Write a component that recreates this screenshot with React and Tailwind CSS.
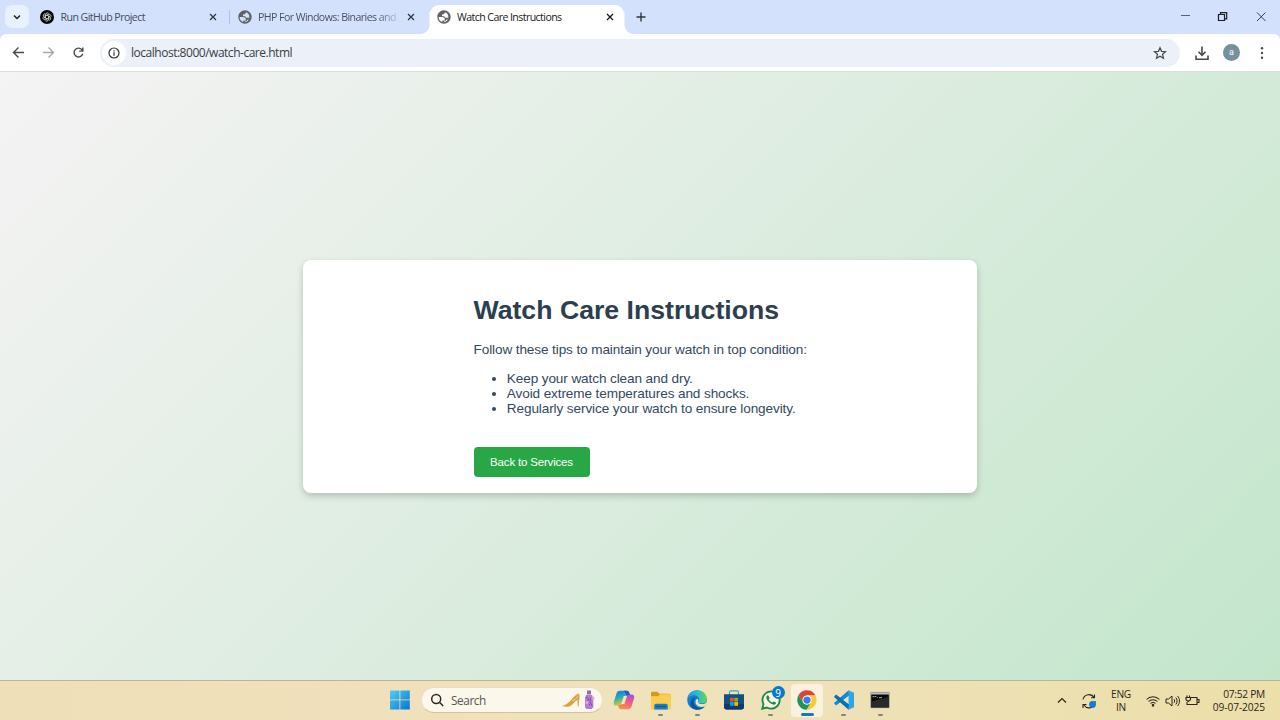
import React from "react";

const ui = "font-['Open_Sans','Noto_Sans',sans-serif]";

function CloseIcon({ className = "text-[#33363b]" }) {
  return (
    <svg width="14" height="14" viewBox="0 0 14 14" className={`shrink-0 ${className}`}>
      <path d="M4 4l6 6M10 4l-6 6" stroke="currentColor" strokeWidth="1.3" fill="none" />
    </svg>
  );
}

function GlobeIcon() {
  return (
    <svg width="14" height="14" viewBox="1.500 1.500 21 21" className="shrink-0">
      <path
        d="M12 2C6.480 2 2 6.480 2 12s4.480 10 10 10 10-4.480 10-10S17.520 2 12 2zM4 12h4.400c3.400 0 5.200 1.700 5 5.100H9.600v2.500A8 8 0 0 1 4 12zm8.200 8v-1.500c2 0 2.800-.6 2.800-2.500h1.500c1.500 0 1.500-2.500 1.500-3h-3.500c-1.500 0-2-1-2-2h-2.500c-1.500 0-1.500-3 0-3h2.200c0-1.500.8-2.600 2.300-2.600h.2A8 8 0 0 1 12.200 20z"
        fill="#5f6368"
        fillRule="evenodd"
      />
    </svg>
  );
}

function KnotIcon() {
  return (
    <svg width="14" height="14" viewBox="0 0 28 28" className="shrink-0">
      <circle cx="14" cy="14" r="14" fill="#050505" />
      <g fill="none" stroke="#e4e4e4" strokeWidth="1.1">
        {[0, 60, 120, 180, 240, 300].map((a) => (
          <path key={a} transform={`rotate(${a} 14 14)`} d="M10.800 16v-6.500a4 4 0 0 1 7.200-2.400M10.800 12l6-3.500 4.500 2.600" />
        ))}
      </g>
    </svg>
  );
}

function TabStrip() {
  return (
    <div className={`flex h-[34px] w-full items-start bg-[#d3e1fd] text-[10.600px] ${ui}`}>
      <div className="ml-[5px] mt-[5px] flex h-[23px] w-[24px] items-center justify-center rounded-[7px] bg-[#e9f0fe]">
        <svg width="10" height="10" viewBox="0 0 10 10">
          <path d="M2 3.500l3 3 3-3" fill="none" stroke="#202124" strokeWidth="1.500" />
        </svg>
      </div>
      <div className="ml-[11px] flex h-[34px] w-[180px] items-center">
        <KnotIcon />
        <span className="ml-[6.500px] mt-px grow whitespace-nowrap tracking-[-0.560px] text-[#474c55]">Run GitHub Project</span>
        <CloseIcon />
      </div>
      <div className="ml-[9px] mt-[10px] h-[14px] w-px bg-[#a8c2f5]" />
      <div className="ml-[8px] flex h-[34px] w-[180px] items-center">
        <GlobeIcon />
        <span className="ml-[6px] mr-[7px] mt-px w-[139px] shrink-0 whitespace-nowrap bg-linear-to-r from-[#474c55] from-85% to-[#b4c2dc] bg-clip-text tracking-[-0.570px] text-transparent">
          PHP For Windows: Binaries and
        </span>
        <CloseIcon />
      </div>
      <svg width="12" height="34" viewBox="0 0 12 34" className="shrink-0">
        <path d="M12 34H2.500C8 33.500 11.500 30 11.500 24V12H12z" fill="#fff" />
      </svg>
      <div className="mt-[5px] flex h-[29px] w-[194px] items-center rounded-t-[9px] bg-white pb-[5px] pl-[7px] pr-[7px]">
        <GlobeIcon />
        <span className="ml-[6px] mt-px grow whitespace-nowrap tracking-[-0.580px] text-[#202124]">Watch Care Instructions</span>
        <CloseIcon className="text-[#18191b]" />
      </div>
      <svg width="10" height="34" viewBox="0 0 10 34" className="shrink-0">
        <path d="M0 34h9.500C4 33.500 .5 30 .5 24V12H0z" fill="#fff" />
      </svg>
      <svg width="14" height="34" viewBox="0 0 14 34" className="shrink-0">
        <path d="M7 12.500v9M2.500 17h9" stroke="#33363b" strokeWidth="1.400" />
      </svg>
      <div className="grow" />
      <svg width="112" height="34" viewBox="0 0 112 34" fill="none" stroke="#1b1c1f" strokeWidth="1">
        <path d="M13 15.500h9" stroke="#54617a" />
        <path d="M50.500 14.500h6v6h-6zM52.500 14.500v-1.800h6.200v6.200h-2" strokeWidth="1.200" />
        <path d="M89 12.500l8.500 8.500M97.500 12.500L89 21" stroke="#34405a" />
      </svg>
    </div>
  );
}

function Toolbar() {
  return (
    <div className="h-[38px] w-full bg-[#d3e1fd]">
      <div className="flex h-[38px] w-full items-center rounded-t-[6px] border-b border-[#dcdfdf] bg-white">
        <svg width="100" height="37" viewBox="0 0 100 37" fill="none" strokeWidth="1.400" className="shrink-0">
          <path d="M24 18.500H13.500M18.500 13.500l-5 5 5 5" stroke="#46494d" />
          <path d="M43 18.500h10.500M48.500 13.500l5 5-5 5" stroke="#a5a7aa" />
          <path d="M82.200 16.200a4.400 4.400 0 1 0 .5 3.500M82.800 13.500v3.600h-3.600" stroke="#46494d" />
        </svg>
        <div className="flex h-[28px] w-[1080px] shrink-0 items-center rounded-full bg-[#ebf0f9] pl-[2px]">
          <div className="flex h-[24px] w-[24px] items-center justify-center rounded-full bg-white">
            <svg width="12" height="12" viewBox="0 0 12 12">
              <circle cx="6" cy="6" r="5" fill="none" stroke="#303236" strokeWidth="1.200" />
              <path d="M6 5.300v3.400M6 3.200v1.300" stroke="#303236" strokeWidth="1.200" />
            </svg>
          </div>
          <span className={`ml-[5px] mt-px grow text-[12px] tracking-[-0.480px] text-[#3a3d42] ${ui}`}>localhost:8000/watch-care.html</span>
          <svg width="14" height="14" viewBox="0 0 24 24" className="mr-[13px]">
            <path d="M12 3l2.700 6.200 6.800.6-5.100 4.500 1.500 6.700L12 17.400 6.100 21l1.500-6.700-5.100-4.500 6.800-.6z" fill="none" stroke="#46494d" strokeWidth="2.100" />
          </svg>
        </div>
        <svg width="16" height="16" viewBox="0 0 16 16" className="ml-[14px]" fill="none" stroke="#46494d" strokeWidth="1.600">
          <path d="M8 1.500v8.500M4.500 6.800L8 10.300l3.500-3.500M2 10.500v3.700h12v-3.700" />
        </svg>
        <div className="ml-[13px] flex h-[17px] w-[17px] items-center justify-center rounded-full bg-[#76909c] font-['Roboto',sans-serif] text-[9px] leading-[17px] text-white">a</div>
        <svg width="16" height="16" viewBox="0 0 16 16" className="ml-[14px]" fill="#46494d">
          <circle cx="8" cy="3.200" r="1.200" />
          <circle cx="8" cy="8" r="1.200" />
          <circle cx="8" cy="12.800" r="1.200" />
        </svg>
      </div>
    </div>
  );
}

function CareCard() {
  return (
    <main className="flex h-[608px] w-full items-center justify-center bg-[linear-gradient(135deg,#f5f3f4,#c3e6cb)] pt-px font-['Liberation_Sans',Arial,sans-serif]">
      <section className="flex h-[233px] w-[674px] justify-center rounded-[8px] bg-white shadow-[0_3px_7px_rgba(0,0,0,0.2)]">
        <div className="w-[333px] text-[13.600px] leading-[15px] tracking-[-0.115px] text-[#34495e]">
          <h1 className="mt-[34px] whitespace-nowrap text-[26.667px] font-bold leading-[32px] tracking-normal text-[#2c3e50]">Watch Care Instructions</h1>
          <p className="mt-[16px] whitespace-nowrap">Follow these tips to maintain your watch in top condition:</p>
          <ul className="mt-[14px] list-disc whitespace-nowrap pl-[33.300px]">
            <li>Keep your watch clean and dry.</li>
            <li>Avoid extreme temperatures and shocks.</li>
            <li>Regularly service your watch to ensure longevity.</li>
          </ul>
          <button className="mt-[31px] h-[30px] w-[116px] rounded-[4px] bg-[#28a745] text-[11.500px] tracking-[-0.180px] text-white">Back to Services</button>
        </div>
      </section>
    </main>
  );
}

function Slot({ children, running }) {
  return (
    <div className="flex h-[39px] w-[36.600px] shrink-0 flex-col items-center pt-[9px]">
      {children}
      {running && <div className="mt-[4px] h-[2px] w-[5px] shrink-0 rounded-full bg-[#8b8371]" />}
    </div>
  );
}

function Search() {
  return (
    <div className="mt-[6px] flex h-[26px] w-[182px] shrink-0 items-center rounded-full border border-[#e9dfc5] border-b-[#cfc4a6] bg-[#fbf7ea] pl-[8px]">
      <svg width="14" height="14" viewBox="0 0 14 14" fill="none" stroke="#2b2926" strokeWidth="1.500">
        <circle cx="6.200" cy="6" r="4.500" />
        <path d="M9.500 9.300l3.700 3.700" />
      </svg>
      <span className="ml-[7px] mt-px grow text-[11.800px] tracking-[-0.400px] text-[#595650]">Search</span>
      <svg width="34" height="22" viewBox="0 0 34 22" className="mr-[7px]">
        <path d="M1 17c4-.8 7-3.400 9.500-6.500 2-2.500 4.500-4.800 7-6 1.200 1.200 1.500 3.200.8 5.200l-.7 7.800h-.9l-.1-6.500c-2 .8-3.600 2.500-5 4.300C9.500 18 4 18.500 1 17z" fill="#d4a346" />
        <path d="M11 11.500c2.500.3 4.500-1.500 6-5" stroke="#f2d58e" fill="none" />
        <path d="M26 1.500h4v4h-4z" fill="#8a71b5" />
        <path d="M25 6h6l1.300 3v9.500L30.500 20h-5l-1.500-1.500V9z" fill="#b77bd0" />
        <path d="M25 8l3 2-2 3 3 3M30 8l-1 5 2 4" stroke="#7950a9" fill="none" />
        <circle cx="32" cy="9" r="1.600" fill="#e4a1df" />
        <path d="M24.500 12h3v3h-3z" fill="#de9de2" />
      </svg>
    </div>
  );
}

function Taskbar() {
  return (
    <footer className={`flex h-[40px] w-full border-t border-[#b9b695] bg-linear-to-r from-[#efdfb9] via-[#f0e2bd] to-[#ecdfaa] ${ui}`}>
      <svg width="20" height="20" viewBox="0 0 20 20" className="ml-[390px] mr-[11px] mt-[9px] shrink-0">
        <defs>
          <linearGradient id="win" x1="0" y1="0" x2="20" y2="20" gradientUnits="userSpaceOnUse">
            <stop stopColor="#55cef5" />
            <stop offset="1" stopColor="#0873ce" />
          </linearGradient>
        </defs>
        <path d="M0 .5h9.500v9H0zM10.300.5h9.500v9h-9.500zM0 10.300h9.500v9.200H0zM10.300 10.300h9.500v9.200h-9.500z" fill="url(#win)" />
      </svg>
      <Search />
      <div className="ml-[3px] flex">
        <Slot>
          <svg width="22" height="20" viewBox="0 0 22 20">
            <defs>
              <linearGradient id="cpa" x1="3" y1="1" x2="8" y2="16" gradientUnits="userSpaceOnUse">
                <stop stopColor="#2177da" />
                <stop offset=".45" stopColor="#24a9c5" />
                <stop offset=".72" stopColor="#8fc45c" />
                <stop offset="1" stopColor="#f3c32c" />
              </linearGradient>
              <linearGradient id="cpb" x1="18" y1="5" x2="13" y2="19" gradientUnits="userSpaceOnUse">
                <stop stopColor="#a650dc" />
                <stop offset=".5" stopColor="#ee5d8a" />
                <stop offset="1" stopColor="#f78b51" />
              </linearGradient>
            </defs>
            <path d="M7 .8h7c1.300 0 1.900.8 2.300 2l.7 2.300h-2.600c-1.600 0-2.300.9-2.700 2.200l-2 6.400c-.4 1.300-1 1.900-2.400 1.900H3.500C1 15.600.3 13.800 1 11.400l2.500-8C4.100 1.600 5.200.8 7 .8z" fill="url(#cpa)" />
            <path d="M15 19.200H8c-1.300 0-1.900-.8-2.300-2L5 14.900h2.600c1.600 0 2.300-.9 2.700-2.200l2-6.400c.4-1.300 1-1.900 2.400-1.900h3.800c2.500 0 3.200 1.800 2.500 4.200l-2.500 8c-.6 1.800-1.700 2.600-3.500 2.600z" fill="url(#cpb)" />
            <path d="M13.500.8c1.500 0 2.300.8 2.700 2l.7 2.300h-3c-1.600 0-1-3.200-3.400-4.300z" fill="#2759bd" />
            <path d="M10.800 6h3.200l-2.600 8H8.200z" fill="#f2e4bd" />
          </svg>
        </Slot>
        <Slot running>
          <svg width="20" height="20" viewBox="0 0 20 20" className="shrink-0">
            <path d="M0 3.200C0 2.400.6 1.800 1.400 1.800h5l2 2H18c1 0 1.800.7 1.800 1.700v4H0z" fill="#d49a20" />
            <path d="M0 6.300h7.200L9.400 4.200H18.400c.8 0 1.400.6 1.400 1.400v12.600c0 .7-.6 1.300-1.300 1.300h-17C.6 19.500 0 19 0 18.200z" fill="#fbcf4c" />
            <path d="M3.300 19.500v-4c0-1 .8-1.700 1.700-1.700h10c1 0 1.700.8 1.700 1.700v4z" fill="#147bc4" />
            <path d="M5.500 16.500h9" stroke="#0a5a94" />
          </svg>
        </Slot>
        <Slot running>
          <svg width="20" height="20" viewBox="0 0 24 24" className="shrink-0">
            <defs>
              <linearGradient id="ea" x1="2" y1="8" x2="23" y2="8" gradientUnits="userSpaceOnUse">
                <stop stopColor="#249ee0" />
                <stop offset=".55" stopColor="#2ac1d0" />
                <stop offset="1" stopColor="#67d44c" />
              </linearGradient>
            </defs>
            <circle cx="12" cy="12" r="11.800" fill="#147dce" />
            <path d="M.3 11C1 4.500 6 .2 12 .2c6.700 0 11.800 4.600 11.800 10 0 3.700-2.800 6-6.300 6-2.900 0-4.200-.9-4.200-1.800 0-.7 1.200-1.200 1.200-3.200 0-2.700-2.700-5-6.300-5-3.400 0-6.500 1.600-7.900 4.800z" fill="url(#ea)" />
            <path d="M9 10.500c-2.800 4.500.3 10.300 6 11 3 .3 5.200-.6 7-2.200-2 2.900-5.600 4.700-10 4.500C6 23 3.300 18 4.600 13.700 5.500 11 7 9 10 8.300z" fill="#0c5497" />
            <path d="M13.300 14.400c0 1.500 2.300 2.700 5.200 2.500 2.200-.1 4.300-1.200 5.100-3.200-.3 2.200-1 4.300-2.200 5.700-3.500 2-8.900.8-10.700-2.600-1.100-2.100-.5-4.800 1.600-6.200 1.700.8 1 1.800 1 3.800z" fill="#f0e2bd" />
          </svg>
        </Slot>
        <Slot>
          <svg width="20" height="20" viewBox="0 0 20 20">
            <path d="M5.500 5V2.200c0-.8.500-1.300 1.300-1.300h6.400c.8 0 1.300.5 1.300 1.300V5" fill="none" stroke="#36a8dc" strokeWidth="1.200" />
            <path d="M0 4.300h20v12.500c0 1.700-1 2.700-2.700 2.700H2.700C1 19.500 0 18.500 0 16.800z" fill="#164d85" />
            <path d="M0 14h20v2.800c0 1.700-1 2.700-2.700 2.700H2.700C1 19.500 0 18.500 0 16.800z" fill="#123a67" />
            <path d="M6 7.800h3.700v3.700H6z" fill="#f25022" />
            <path d="M10.300 7.800H14v3.700h-3.700z" fill="#7fba00" />
            <path d="M6 12.100h3.700v3.700H6z" fill="#00a4ef" />
            <path d="M10.300 12.100H14v3.700h-3.700z" fill="#ffb900" />
          </svg>
        </Slot>
        <Slot running>
          <div className="relative h-[20px] w-[20px] shrink-0">
            <svg width="20" height="20" viewBox="0 0 24 24">
              <path d="M1.500 22.500L3 16.900A10.300 10.300 0 1 1 7 21z" fill="#f7f3e1" stroke="#218549" strokeWidth="2.200" />
              <path d="M8.600 6.500c-.5-.3-1.200 0-1.700.8-1.200 2-.2 4.400 2.300 6.900 2.700 2.700 5.800 4.100 7.700 3 1.200-.7 1.300-1.900.9-2.300l-2.600-1.200c-.7-.1-1 1.200-1.700 1.200-1 0-4-2.700-4.100-3.800 0-.6 1-1 .9-1.700z" fill="#218549" />
            </svg>
            <div className="absolute -top-[4px] left-[11px] flex h-[13px] w-[13px] items-center justify-center rounded-full bg-[#0878cb] text-[10px] leading-none text-white">9</div>
          </div>
        </Slot>
        <div className="mx-[2.300px] mt-[3px] flex h-[33px] w-[32px] shrink-0 flex-col items-center rounded-[4px] bg-[#f9f2e0] pt-[6px]">
          <svg width="20" height="20" viewBox="0 0 48 48" className="shrink-0">
            <circle cx="24" cy="24" r="23.500" fill="#fff" />
            <path d="M24 13h20.400A23.500 23.500 0 0 0 3.600 12.200L14 30z" fill="#dc4437" />
            <path d="M33.500 29.500L23.300 47.500A23.500 23.500 0 0 0 44.400 13H24z" fill="#fccb31" />
            <path d="M14.500 29.500L3.600 12.200A23.500 23.500 0 0 0 23.300 47.500L33.500 29.500C30 36 19 37 14.500 29.500z" fill="#219653" />
            <circle cx="24" cy="24" r="11" fill="#fff" />
            <circle cx="24" cy="24" r="8.700" fill="#387eee" />
          </svg>
          <div className="mt-[3px] h-[3px] w-[13px] shrink-0 rounded-full bg-[#1877c5]" />
        </div>
        <Slot running>
          <svg width="20" height="20" viewBox="0 0 24 24" className="shrink-0">
            <path d="M17.500.3L24 3.200v17.600l-6.500 2.900z" fill="#2ba6e8" />
            <path d="M17.500.3L0 15.700l1.800 2.200c.5.400 1 .3 1.500 0L18 6.500z" fill="#1689cf" />
            <path d="M17.500 23.700L0 8.300l1.800-2.200c.5-.4 1-.3 1.500 0L18 17.500z" fill="#0871b8" />
          </svg>
        </Slot>
        <Slot running>
          <svg width="20" height="20" viewBox="0 0 20 20" className="shrink-0">
            <path d="M.8 2.300h18.400v15.500H.8z" fill="#090909" stroke="#a7a7a4" strokeWidth=".8" />
            <path d="M1 2.500h18v2H1z" fill="#bbbdbc" />
            <path d="M2.600 6.700h2M5.400 6v1M6.600 6.700l1 1M9 7.700h3" stroke="#ddd" strokeWidth=".8" />
            <path d="M1.200 12c6-3 12-2 17.600-6v11.500H1.200z" fill="#292929" />
          </svg>
        </Slot>
      </div>
      <div className="grow" />
      <div className="flex h-[39px] shrink-0 items-center text-[10.200px] leading-[13px] text-[#29261b]">
        <svg width="10" height="10" viewBox="0 0 10 10" className="mr-[14px]">
          <path d="M1 6.500l4-4 4 4" fill="none" stroke="currentColor" strokeWidth="1.200" />
        </svg>
        <svg width="16" height="16" viewBox="0 0 16 16" className="mr-[13px]" fill="none" stroke="currentColor" strokeWidth="1.100">
          <path d="M2 6.500a6 6 0 0 1 11-2M13.500 1.500v3.300H10M14 8a6 6 0 0 1-11 4M2 15v-3.500h3.500" />
          <circle cx="11.500" cy="11.500" r="3.400" fill="#147bd0" stroke="none" />
        </svg>
        <div className="w-[22px] whitespace-nowrap text-center tracking-[-0.300px]">
          <div>ENG</div>
          <div>IN</div>
        </div>
        <svg width="14" height="14" viewBox="0 0 14 14" className="ml-[14px]" fill="none" stroke="currentColor" strokeWidth="1.050">
          <path d="M.5 5.500a9.200 9.200 0 0 1 13 0M2.500 7.500a6.400 6.400 0 0 1 9 0M4.500 9.500a3.500 3.500 0 0 1 5 0" />
          <circle cx="7" cy="11.300" r=".8" fill="currentColor" />
        </svg>
        <svg width="15" height="14" viewBox="0 0 15 14" className="ml-[5px]" fill="none" stroke="currentColor" strokeWidth="1">
          <path d="M1 5h2.500L7 2v10L3.500 9H1zM9 5.200c.8 1 .8 2.600 0 3.600M10.800 3.500c1.700 2 1.700 5 0 7M12.600 2c2.500 3 2.500 7 0 10" />
        </svg>
        <svg width="15" height="14" viewBox="0 0 15 14" className="ml-[5px]" fill="none" stroke="currentColor" strokeWidth="1.100">
          <path d="M6 3.500h6v7H2V8M12.500 5.500H14v3h-1.500M2 1.500v2M4.500 1.500v2M1 3.500h4.500v2.200L3.300 7.500 1 5.700z" />
        </svg>
        <div className="ml-[8px] mr-[15px] flex w-[57px] flex-col items-end whitespace-nowrap">
          <div className="tracking-[-0.270px]">07:52 PM</div>
          <div className="tracking-[-0.100px]">09-07-2025</div>
        </div>
      </div>
    </footer>
  );
}

export default function App() {
  return (
    <div className="flex h-[720px] w-[1280px] flex-col overflow-hidden">
      <TabStrip />
      <Toolbar />
      <CareCard />
      <Taskbar />
    </div>
  );
}
